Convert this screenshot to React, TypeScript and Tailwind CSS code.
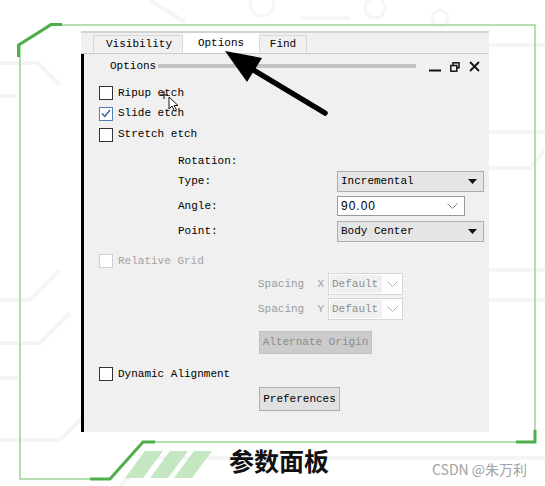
import React from "react";

/* ─── small drawings ─── */
const Tri = () => (
  <svg width="9" height="5" viewBox="0 0 9 5">
    <path d="M0 0h9L4.5 5z" fill="#111" />
  </svg>
);

const Chev = ({ color = "#8a8a8a" }: { color?: string }) => (
  <svg width="11" height="6" viewBox="0 0 11 6">
    <path d="M0.5 0.5L5.5 5.5L10.5 0.5" fill="none" stroke={color} strokeWidth="1" />
  </svg>
);

type BoxState = "off" | "on" | "disabled";

const CheckBox: React.FC<{ state: BoxState }> = ({ state }) => {
  if (state === "on") {
    return (
      <div className="w-[14px] h-[14px] border border-[#4f7fb8] bg-white flex items-center justify-center shrink-0">
        <svg width="10" height="9" viewBox="0 0 10 9">
          <path d="M1 4.5L3.8 7.5L9 1" fill="none" stroke="#2f62a0" strokeWidth="1.4" />
        </svg>
      </div>
    );
  }
  return (
    <div
      className={`w-[14px] h-[14px] border bg-white shrink-0 ${
        state === "disabled" ? "border-[#cfcfcf]" : "border-[#333333]"
      }`}
    />
  );
};

const CheckRow: React.FC<{ label: string; state: BoxState; className?: string }> = ({
  label,
  state,
  className = "",
}) => (
  <div className={`flex items-center pl-[15px] gap-[5px] ${className}`}>
    <CheckBox state={state} />
    <span className={state === "disabled" ? "text-[#a3a3a3]" : "text-black"}>{label}</span>
  </div>
);

const Select: React.FC<{ value: string }> = ({ value }) => (
  <div className="w-[147px] h-full bg-[#e5e5e5] border border-[#adadad] flex items-center justify-between pl-[3px] pr-[6px]">
    <span>{value}</span>
    <Tri />
  </div>
);

const SpacingRow: React.FC<{ axis: string; className?: string }> = ({ axis, className = "" }) => (
  <div className={`flex items-center h-[22px] pl-[174px] ${className}`}>
    <span className="whitespace-pre text-[#9c9c9c] w-[70px]">{`Spacing  ${axis}`}</span>
    <div className="w-[75px] h-full bg-white border border-[#d6d6d6] flex items-center pl-[1px] pr-[4px] justify-between">
      <span className="bg-[#f0f0f0] text-[#8e8e8e] h-[18px] leading-[18px] pl-[2px] w-[52px]">Default</span>
      <Chev color="#b5b5b5" />
    </div>
  </div>
);

/* ─── decorations behind the window ─── */
const Backdrop = () => (
  <svg className="absolute inset-0" width="545" height="486" viewBox="0 0 545 486">
    <g stroke="#f5f5f5" strokeWidth="4" fill="none">
      <path d="M0 63H38L60 85" />
      <path d="M0 96H16" />
      <path d="M0 300H30L60 270" />
      <path d="M0 343H40L70 313" />
      <path d="M0 378H18" />
      <path d="M0 440H60L95 405" />
      <path d="M120 486L150 458H545" />
      <path d="M489 45H545" />
      <path d="M489 132H545" />
      <path d="M489 168L530 168L545 150" />
      <path d="M489 270H545" />
      <path d="M489 300H545" />
      <path d="M150 0L185 22" />
    </g>
    <g stroke="#f6f6f6" strokeWidth="3" fill="none">
      <circle cx="262" cy="4" r="12" />
      <circle cx="375" cy="8" r="10" />
      <circle cx="440" cy="18" r="8" />
      <path d="M300 18H350" />
    </g>
    <polyline
      points="62,25 535,25 535,442 143,442 110,479 20,479 20,45 52,25 62,25"
      stroke="#9bd597"
      strokeWidth="1.5"
      fill="none"
    />
    <g stroke="#4fae4a" strokeWidth="3" fill="none">
      <polyline points="18.5,57 18.5,45 51,24.5 62,24.5" />
      <polyline points="516,442 535,442 535,430" />
      <polyline points="90,479 110,479 143,442 155,442" />
    </g>
    <g fill="#c4e7c1">
      <polygon points="145,451 163,451 143,478 125,478" />
      <polygon points="170,451 188,451 168,478 150,478" />
      <polygon points="194,451 212,451 192,478 174,478" />
    </g>
  </svg>
);

/* ─── arrow and mouse pointer on top ─── */
const Overlay = () => (
  <svg className="absolute inset-0 pointer-events-none" width="545" height="486" viewBox="0 0 545 486">
    <polygon points="225,51 262,58 247,82" fill="#000" />
    <line x1="250" y1="68" x2="325" y2="113" stroke="#000" strokeWidth="5.5" strokeLinecap="round" />
    <g transform="translate(169,97)">
      <path d="M0 0V12L3 9L5.5 14L7.5 13L5 8.5H9Z" fill="#fff" stroke="#000" strokeWidth="0.9" />
    </g>
    <g stroke="#000" strokeWidth="1" fill="none">
      <path d="M160 95H168M164 91V99" />
    </g>
  </svg>
);

export default function App() {
  return (
    <div className="relative w-[545px] h-[486px] overflow-hidden bg-white font-['Liberation_Mono',monospace] text-[11px] leading-none text-black">
      <Backdrop />

      <div className="relative">
        {/* window */}
        <div className="pt-[31px] pl-[81px]">
          <div className="w-[408px] h-[401px] flex flex-col">
            {/* tab strip */}
            <div className="h-[23px] border-t-2 border-b border-t-[#d3d3d3] border-b-[#cbcbcb] bg-[#f0f0f0] flex items-end pl-[12px] shrink-0">
              <div className="w-[90px] h-[18px] border border-b-0 border-[#d9d9d9] bg-[#f0f0f0] flex items-center justify-center pl-[2px]">
                Visibility
              </div>
              <div className="w-[76px] h-[20px] bg-white flex items-center justify-center">Options</div>
              <div className="w-[48px] h-[18px] border border-b-0 border-[#d9d9d9] bg-[#f0f0f0] flex items-center justify-center">
                Find
              </div>
            </div>

            {/* panel */}
            <div className="flex-1 bg-[#f0f0f0] border-l-[3px] border-black flex flex-col">
              <div className="flex items-center h-[14px] mt-[5px] pl-[26px]">
                <span>Options</span>
                <div className="ml-[2px] w-[258px] h-[4px] bg-[#c2c2c2]" />
                <div className="ml-[13px] flex items-end gap-[9px] h-[11px]">
                  <svg width="12" height="11" viewBox="0 0 12 11">
                    <rect x="0" y="8.5" width="12" height="2" fill="#111" />
                  </svg>
                  <svg width="10" height="10" viewBox="0 0 10 10">
                    <rect x="3" y="0.8" width="6" height="5" fill="none" stroke="#111" strokeWidth="1.5" />
                    <rect x="0.8" y="3.5" width="6" height="5.7" fill="#f0f0f0" stroke="#111" strokeWidth="1.5" />
                  </svg>
                  <svg width="11" height="11" viewBox="0 0 11 11">
                    <path d="M1 1L10 10M10 1L1 10" stroke="#111" strokeWidth="1.8" />
                  </svg>
                </div>
              </div>

              <CheckRow label="Ripup etch" state="off" className="h-[20px] mt-[10px]" />
              <CheckRow label="Slide etch" state="on" className="h-[21px]" />
              <CheckRow label="Stretch etch" state="off" className="h-[21px]" />

              <div className="h-[20px] mt-[6px] pl-[94px] flex items-center">Rotation:</div>
              <div className="h-[21px] pl-[94px] flex items-center">
                <span className="w-[159px]">Type:</span>
                <Select value="Incremental" />
              </div>
              <div className="h-[20px] mt-[4px] pl-[94px] flex items-center">
                <span className="w-[159px]">Angle:</span>
                <div className="w-[128px] h-full bg-white border border-[#9a9a9a] flex items-center justify-between pl-[3px] pr-[6px]">
                  <span className="font-['Liberation_Sans',sans-serif] text-[12px] tracking-[1px]">90.00</span>
                  <Chev />
                </div>
              </div>
              <div className="h-[21px] mt-[5px] pl-[94px] flex items-center">
                <span className="w-[159px]">Point:</span>
                <Select value="Body Center" />
              </div>

              <CheckRow label="Relative Grid" state="disabled" className="h-[20px] mt-[9px]" />

              <SpacingRow axis="X" className="mt-[2px]" />
              <SpacingRow axis="Y" className="mt-[3px]" />

              <div className="mt-[11px] pl-[175px]">
                <div className="w-[113px] h-[23px] bg-[#cbcbcb] border border-[#c0c0c0] text-[#8d8d8d] flex items-center justify-center">
                  Alternate Origin
                </div>
              </div>

              <CheckRow label="Dynamic Alignment" state="off" className="h-[20px] mt-[10px]" />

              <div className="mt-[3px] pl-[175px]">
                <div className="w-[81px] h-[24px] bg-[#e1e1e1] border border-[#adadad] flex items-center justify-center">
                  Preferences
                </div>
              </div>
            </div>
          </div>
        </div>

        {/* caption */}
        <div className="flex items-start pl-[229px] mt-[14px]">
          <span className="font-['Noto_Sans_CJK_SC',sans-serif] font-bold text-[25px] leading-[28px] text-[#111]">
            参数面板
          </span>
          <span className="ml-[103px] mt-[15px] font-['Noto_Sans_CJK_SC',sans-serif] text-[14px] leading-[16px] text-[#a2a2a2]">
            CSDN @朱万利
          </span>
        </div>
      </div>

      <Overlay />
    </div>
  );
}
